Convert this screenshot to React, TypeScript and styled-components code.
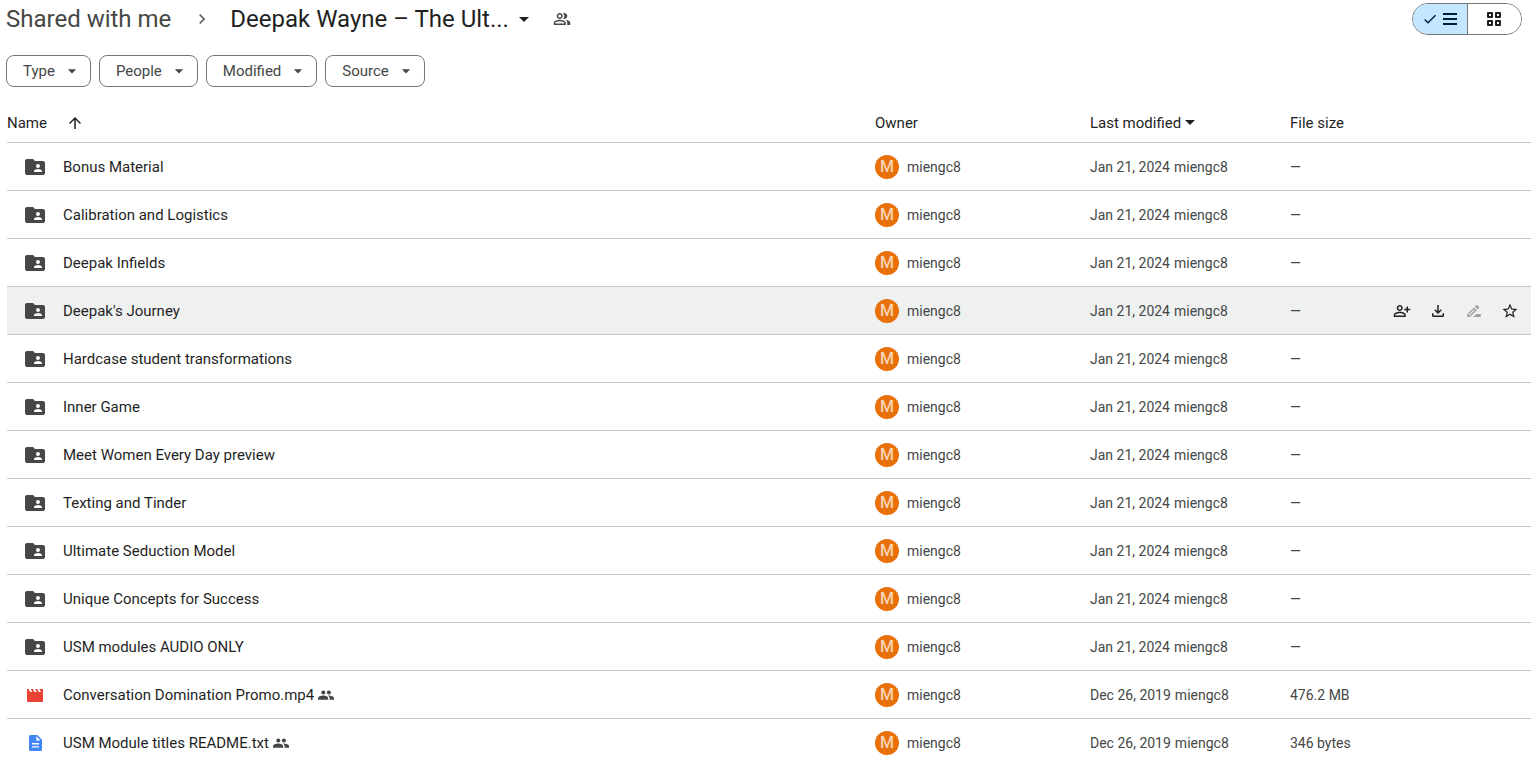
import React from "react";
import styled, { createGlobalStyle } from "styled-components";
import {
  MdArrowDropDown,
  MdArrowUpward,
  MdCheck,
  MdChevronRight,
  MdFolderShared,
  MdOutlineDriveFileRenameOutline,
  MdOutlineFileDownload,
  MdOutlinePeopleAlt,
  MdOutlinePersonAddAlt,
  MdStarOutline,
} from "react-icons/md";

const GlobalStyle = createGlobalStyle`
  *, *::before, *::after { box-sizing: border-box; }
  html, body { margin: 0; }
  body {
    background: #ffffff;
    color: #1f1f1f;
    font-family: Roboto, "Liberation Sans", sans-serif;
    font-size: 15px;
    line-height: 20px;
    overflow: hidden;
  }
  button { font: inherit; color: inherit; background: none; border: 0; padding: 0; margin: 0; cursor: pointer; }
  svg { display: block; flex: none; }
`;

const Page = styled.main`
  padding-left: 6px;
`;

const TopBar = styled.header`
  display: flex;
  align-items: center;
  justify-content: space-between;
  height: 38px;
  padding-right: 9px;
`;

const Breadcrumbs = styled.nav`
  display: flex;
  align-items: center;
  font-size: 24px;
  line-height: 32px;
`;

const Crumb = styled.a`
  color: #444746;
  text-decoration: none;
  white-space: nowrap;
`;

const CrumbSeparator = styled.span`
  display: flex;
  padding: 0 18px 0 21px;
  color: #5f6368;
`;

const CurrentFolder = styled.button`
  display: flex;
  align-items: center;
  gap: 3px;
  white-space: nowrap;
`;

const IconButton = styled.button<{ $size: number }>`
  display: flex;
  align-items: center;
  justify-content: center;
  width: ${(p) => p.$size}px;
  height: ${(p) => p.$size}px;
  color: #444746;

  &:disabled {
    color: #a0a2a1;
  }
`;

const CrumbAction = styled(IconButton)`
  margin-left: 14px;
`;

const ViewSwitch = styled.div`
  display: flex;
  width: 110px;
  height: 32px;
  border: 1px solid #747775;
  border-radius: 16px;
  overflow: hidden;
`;

const ViewOption = styled.button<{ $active?: boolean }>`
  flex: 1;
  display: flex;
  align-items: center;
  justify-content: center;
  gap: 5px;
  color: ${(p) => (p.$active ? "#001d35" : "#1f1f1f")};
  background: ${(p) => (p.$active ? "#c2e7ff" : "#ffffff")};

  & + & {
    border-left: 1px solid #747775;
  }
`;

const Filters = styled.div`
  display: flex;
  gap: 8px;
  padding-top: 17px;
`;

const Chip = styled.button`
  display: flex;
  align-items: center;
  gap: 7px;
  height: 32px;
  padding: 0 8px 0 16px;
  border: 1px solid #747775;
  border-radius: 8px;
  color: #444746;
  font-weight: 450;
`;

const FileTable = styled.table`
  width: 100%;
  margin-top: 16px;
  padding-left: 1px;
  border-spacing: 0;
  table-layout: fixed;
`;

const Column = styled.col<{ $width?: number }>`
  width: ${(p) => (p.$width ? `${p.$width}px` : "auto")};
`;

const HeadCell = styled.th`
  height: 40px;
  padding: 0;
  border-bottom: 1px solid #c4c7c5;
  font-weight: 450;
  text-align: left;
`;

const SortButton = styled.button<{ $gap: number }>`
  display: flex;
  align-items: center;
  gap: ${(p) => p.$gap}px;
`;

const Row = styled.tr<{ $hovered?: boolean }>`
  background: ${(p) => (p.$hovered ? "#eff1f1" : "#ffffff")};
`;

const Cell = styled.td`
  height: 48px;
  padding: 0;
  border-bottom: 1px solid #c4c7c5;
  color: #444746;
  font-size: 14px;
  white-space: nowrap;
`;

const NameContent = styled.div`
  display: flex;
  align-items: center;
  padding-left: 16px;
  color: #1f1f1f;
  font-size: 15px;
  font-weight: 450;
`;

const FileIcon = styled.span`
  display: flex;
  margin-right: 16px;
  color: #444746;
`;

const SharedMark = styled.span`
  display: flex;
  margin-left: 4px;
  color: #444746;
`;

const Owner = styled.div`
  display: flex;
  align-items: center;
  gap: 8px;
`;

const Avatar = styled.span`
  display: flex;
  align-items: center;
  justify-content: center;
  width: 24px;
  height: 24px;
  border-radius: 50%;
  background: #e8710a;
  color: #fad4b4;
  font-size: 16px;
  font-weight: 500;
`;

const Modified = styled.div`
  display: flex;
  gap: 4px;
`;

const Actions = styled.div`
  display: flex;
  justify-content: flex-end;
  gap: 8px;
  padding-right: 7px;

  button:not(:disabled) {
    color: #1f1f1f;
  }
`;

const ListIcon = () => (
  <svg width="14" height="14" viewBox="0 0 14 14" fill="currentColor" aria-hidden="true">
    <path d="M0 1h14v2H0zM0 6h14v2H0zM0 11h14v2H0z" />
  </svg>
);

const GridIcon = () => (
  <svg width="14" height="14" viewBox="0 0 14 14" fill="none" stroke="currentColor" strokeWidth="2" strokeLinejoin="round" aria-hidden="true">
    <path d="M1 1h4v4H1zM9 1h4v4H9zM1 9h4v4H1zM9 9h4v4H9z" />
  </svg>
);

const SortCaret = () => (
  <svg width="10" height="5" viewBox="0 0 10 5" fill="currentColor" aria-hidden="true">
    <path d="M0 0h10L5 5z" />
  </svg>
);

const VideoIcon = () => (
  <svg width="24" height="24" viewBox="0 0 24 24" fill="#ea4335" aria-hidden="true">
    <path d="M4 6h1.6l1.6 3h2.2L7.8 6h2.1l1.6 3h2.2l-1.6-3h2.1l1.6 3H18l-1.6-3H20v12a1 1 0 0 1-1 1H5a1 1 0 0 1-1-1z" />
  </svg>
);

const DocumentIcon = () => (
  <svg width="24" height="24" viewBox="0 0 24 24" aria-hidden="true">
    <path
      fill="#4285f4"
      fillRule="evenodd"
      d="M7.500 4h6.800L19 8.700V18.500a1.500 1.500 0 0 1-1.500 1.500h-10A1.500 1.500 0 0 1 6 18.500v-13A1.500 1.500 0 0 1 7.500 4zM13.300 5.300v4.200h4.200zM9 12h7v1.400H9zM9 15.200h7v1.400H9z"
    />
  </svg>
);

const SharedIcon = () => (
  <svg width="16" height="16" viewBox="0 0 16 16" fill="currentColor" aria-hidden="true">
    <circle cx="5.300" cy="5.600" r="2" />
    <circle cx="10.900" cy="5.600" r="2" />
    <path d="M0 12.700v-1.500C0 9.500 2.600 8.600 5.200 8.600s5 .9 5 2.600v1.500zM9.800 8.600c3.400 0 6.200.9 6.200 2.600v1.500h-4.400v-1.500c0-1.100-.8-1.900-1.800-2.600z" />
  </svg>
);

type Kind = "folder" | "video" | "document";

interface Entry {
  name: string;
  kind: Kind;
  date: string;
  size: string;
  shared?: boolean;
  hovered?: boolean;
}

const folder = (name: string, hovered = false): Entry => ({
  name,
  kind: "folder",
  date: "Jan 21, 2024",
  size: "—",
  hovered,
});

const entries: Entry[] = [
  folder("Bonus Material"),
  folder("Calibration and Logistics"),
  folder("Deepak Infields"),
  folder("Deepak's Journey", true),
  folder("Hardcase student transformations"),
  folder("Inner Game"),
  folder("Meet Women Every Day preview"),
  folder("Texting and Tinder"),
  folder("Ultimate Seduction Model"),
  folder("Unique Concepts for Success"),
  folder("USM modules AUDIO ONLY"),
  { name: "Conversation Domination Promo.mp4", kind: "video", date: "Dec 26, 2019", size: "476.2 MB", shared: true },
  { name: "USM Module titles README.txt", kind: "document", date: "Dec 26, 2019", size: "346 bytes", shared: true },
];

const owner = "miengc8";

const kindIcons: Record<Kind, React.ReactNode> = {
  folder: <MdFolderShared size={24} />,
  video: <VideoIcon />,
  document: <DocumentIcon />,
};

const FileRow = ({ entry }: { entry: Entry }) => (
  <Row $hovered={entry.hovered}>
    <Cell>
      <NameContent>
        <FileIcon>{kindIcons[entry.kind]}</FileIcon>
        {entry.name}
        {entry.shared && (
          <SharedMark>
            <SharedIcon />
          </SharedMark>
        )}
      </NameContent>
    </Cell>
    <Cell>
      <Owner>
        <Avatar>M</Avatar>
        {owner}
      </Owner>
    </Cell>
    <Cell>
      <Modified>
        <span>{entry.date}</span>
        <span>{owner}</span>
      </Modified>
    </Cell>
    <Cell>{entry.size}</Cell>
    <Cell>
      {entry.hovered && (
        <Actions>
          <IconButton $size={28} aria-label="Share">
            <MdOutlinePersonAddAlt size={18} />
          </IconButton>
          <IconButton $size={28} aria-label="Download">
            <MdOutlineFileDownload size={18} />
          </IconButton>
          <IconButton $size={28} aria-label="Rename" disabled>
            <MdOutlineDriveFileRenameOutline size={18} />
          </IconButton>
          <IconButton $size={28} aria-label="Add to starred">
            <MdStarOutline size={18} />
          </IconButton>
        </Actions>
      )}
    </Cell>
  </Row>
);

export default function App() {
  return (
    <Page>
      <GlobalStyle />
      <TopBar>
        <Breadcrumbs aria-label="Folder path">
          <Crumb href="#shared">Shared with me</Crumb>
          <CrumbSeparator>
            <MdChevronRight size={20} />
          </CrumbSeparator>
          <CurrentFolder>
            Deepak Wayne – The Ult...
            <MdArrowDropDown size={24} />
          </CurrentFolder>
          <CrumbAction $size={24} aria-label="Manage people">
            <MdOutlinePeopleAlt size={18} />
          </CrumbAction>
        </Breadcrumbs>
        <ViewSwitch role="group" aria-label="Layout">
          <ViewOption $active aria-pressed="true" aria-label="List layout">
            <MdCheck size={16} />
            <ListIcon />
          </ViewOption>
          <ViewOption aria-pressed="false" aria-label="Grid layout">
            <GridIcon />
          </ViewOption>
        </ViewSwitch>
      </TopBar>
      <Filters>
        {["Type", "People", "Modified", "Source"].map((label) => (
          <Chip key={label}>
            {label}
            <MdArrowDropDown size={20} />
          </Chip>
        ))}
      </Filters>
      <FileTable>
        <colgroup>
          <Column />
          <Column $width={215} />
          <Column $width={200} />
          <Column $width={90} />
          <Column $width={151} />
        </colgroup>
        <thead>
          <tr>
            <HeadCell>
              <SortButton $gap={19}>
                Name
                <MdArrowUpward size={18} />
              </SortButton>
            </HeadCell>
            <HeadCell>Owner</HeadCell>
            <HeadCell>
              <SortButton $gap={4}>
                Last modified
                <SortCaret />
              </SortButton>
            </HeadCell>
            <HeadCell>File size</HeadCell>
            <HeadCell aria-label="Actions" />
          </tr>
        </thead>
        <tbody>
          {entries.map((entry) => (
            <FileRow key={entry.name} entry={entry} />
          ))}
        </tbody>
      </FileTable>
    </Page>
  );
}
